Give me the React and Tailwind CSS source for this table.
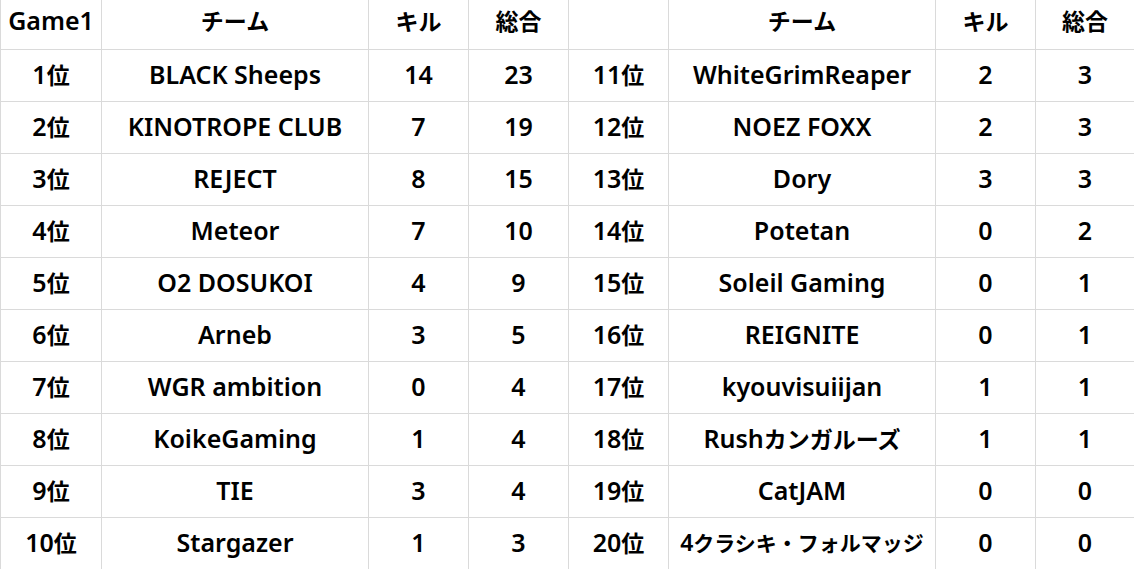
const left = [
  ["1位", "BLACK Sheeps", "14", "23"],
  ["2位", "KINOTROPE CLUB", "7", "19"],
  ["3位", "REJECT", "8", "15"],
  ["4位", "Meteor", "7", "10"],
  ["5位", "O2 DOSUKOI", "4", "9"],
  ["6位", "Arneb", "3", "5"],
  ["7位", "WGR ambition", "0", "4"],
  ["8位", "KoikeGaming", "1", "4"],
  ["9位", "TIE", "3", "4"],
  ["10位", "Stargazer", "1", "3"],
];
const right = [
  ["11位", "WhiteGrimReaper", "2", "3"],
  ["12位", "NOEZ FOXX", "2", "3"],
  ["13位", "Dory", "3", "3"],
  ["14位", "Potetan", "0", "2"],
  ["15位", "Soleil Gaming", "0", "1"],
  ["16位", "REIGNITE", "0", "1"],
  ["17位", "kyouvisuiijan", "1", "1"],
  ["18位", "Rushカンガルーズ", "1", "1"],
  ["19位", "CatJAM", "0", "0"],
  ["20位", "4クラシキ・フォルマッジ", "0", "0"],
];

const cjk = /[\u3000-\u30ff\u4e00-\u9fff\uff00-\uffef]+/g;

function Text({ t, small }) {
  const parts = [];
  let last = 0;
  let m;
  cjk.lastIndex = 0;
  while ((m = cjk.exec(t))) {
    if (m.index > last) parts.push([false, t.slice(last, m.index)]);
    parts.push([true, m[0]]);
    last = m.index + m[0].length;
  }
  if (last < t.length) parts.push([false, t.slice(last)]);
  return (
    <>
      {parts.map(([isJ, s], i) =>
        isJ ? (
          <span
            key={i}
            className={`${small ? "text-[21px]" : "text-[23px]"} font-bold`}
            style={{ fontFamily: '"Noto Sans CJK JP", sans-serif' }}
          >
            {s}
          </span>
        ) : (
          <span
            key={i}
            className={`${small ? "text-[23px]" : "text-[25px]"} font-semibold`}
            style={{ fontFamily: '"Noto Sans", sans-serif' }}
          >
            {s}
          </span>
        )
      )}
    </>
  );
}

function Cell({ t, h, small, header }) {
  return (
    <div
      className={`flex items-center justify-center border-r border-b border-[#dadada] ${h} ${header ? "pb-[8px]" : "pb-[3px]"} leading-none text-black whitespace-nowrap`}
    >
      <Text t={t} small={small} />
    </div>
  );
}

export default function App() {
  const header = ["Game1", "チーム", "キル", "総合", "", "チーム", "キル", "総合"];
  const rows = left.map((l, i) => [...l, ...right[i]]);
  return (
    <div className="w-[1134px] h-[569px] bg-white overflow-hidden">
      <div className="grid grid-cols-[101px_267px_100px_100px_100px_267px_100px_99px] border-l border-[#dadada] w-[1135px]">
        {header.map((t, i) => (
          <Cell key={"h" + i} t={t} h="h-[50px]" header />
        ))}
        {rows.map((r, ri) =>
          r.map((t, ci) => (
            <Cell key={ri + "-" + ci} t={t} h="h-[52px]" small={ci === 5 && ri === 9} />
          ))
        )}
      </div>
    </div>
  );
}
